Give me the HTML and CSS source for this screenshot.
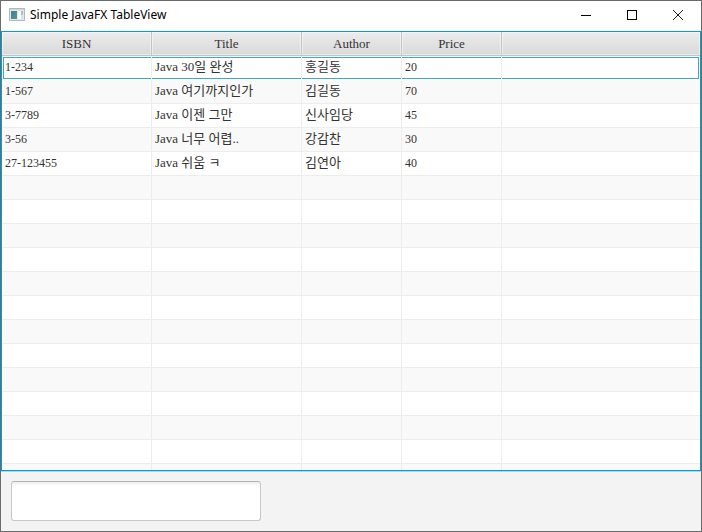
FILE: index.html
```
<!DOCTYPE html>
<html lang="ko">
<head>
<meta charset="utf-8">
<meta name="viewport" content="width=device-width, initial-scale=1">
<title>Simple JavaFX TableView</title>
<link rel="stylesheet" href="styles.css">
</head>
<body>
<div class="window">
  <header class="titlebar">
    <svg class="app-icon" width="16" height="14" viewBox="0 0 16 14" aria-hidden="true">
      <defs>
        <linearGradient id="pane" x1="0" y1="0" x2="1" y2="1">
          <stop offset="0" stop-color="#4778a8"/>
          <stop offset="1" stop-color="#48a378"/>
        </linearGradient>
      </defs>
      <rect x="0.5" y="0.5" width="15" height="12" fill="#e4e8ec" stroke="#b4b9bf"/>
      <rect x="1" y="1" width="14" height="1" fill="#d0d5db"/>
      <rect x="2" y="3" width="6" height="8" fill="url(#pane)"/>
      <rect x="9" y="3" width="3" height="8" fill="#fafbfd"/>
      <rect x="12" y="3" width="2" height="4" fill="#a5c3bb"/>
      <rect x="12" y="7" width="2" height="4" fill="#dce2e4"/>
    </svg>
    <h1 class="title">Simple JavaFX TableView</h1>
    <div class="controls">
      <button class="control" type="button" aria-label="Minimize">
        <svg width="12" height="12" viewBox="0 0 12 12"><path d="M1 6.5H11" stroke="#000"/></svg>
      </button>
      <button class="control" type="button" aria-label="Maximize">
        <svg width="12" height="12" viewBox="0 0 12 12"><rect x="1.5" y="1.5" width="9" height="9" fill="none" stroke="#000"/></svg>
      </button>
      <button class="control" type="button" aria-label="Close">
        <svg width="12" height="12" viewBox="0 0 12 12"><path d="M1 1L11 11M11 1L1 11" stroke="#000" stroke-width="0.9"/></svg>
      </button>
    </div>
  </header>
  <main class="table-view">
    <table class="books">
      <colgroup><col class="wide"><col class="wide"><col class="narrow"><col class="narrow"><col></colgroup>
      <thead>
        <tr><th scope="col">ISBN</th><th scope="col">Title</th><th scope="col">Author</th><th scope="col">Price</th><td></td></tr>
      </thead>
      <tbody>
        <tr class="focused"><td class="num">1-234</td><td>Java 30일 완성</td><td>홍길동</td><td class="num">20</td><td></td></tr>
        <tr><td class="num">1-567</td><td>Java 여기까지인가</td><td>김길동</td><td class="num">70</td><td></td></tr>
        <tr><td class="num">3-7789</td><td>Java 이젠 그만</td><td>신사임당</td><td class="num">45</td><td></td></tr>
        <tr><td class="num">3-56</td><td>Java 너무 어렵..</td><td>강감찬</td><td class="num">30</td><td></td></tr>
        <tr><td class="num">27-123455</td><td>Java 쉬움 ㅋ</td><td>김연아</td><td class="num">40</td><td></td></tr>
        <tr><td></td><td></td><td></td><td></td><td></td></tr>
        <tr><td></td><td></td><td></td><td></td><td></td></tr>
        <tr><td></td><td></td><td></td><td></td><td></td></tr>
        <tr><td></td><td></td><td></td><td></td><td></td></tr>
        <tr><td></td><td></td><td></td><td></td><td></td></tr>
        <tr><td></td><td></td><td></td><td></td><td></td></tr>
        <tr><td></td><td></td><td></td><td></td><td></td></tr>
        <tr><td></td><td></td><td></td><td></td><td></td></tr>
        <tr><td></td><td></td><td></td><td></td><td></td></tr>
        <tr><td></td><td></td><td></td><td></td><td></td></tr>
        <tr><td></td><td></td><td></td><td></td><td></td></tr>
        <tr><td></td><td></td><td></td><td></td><td></td></tr>
        <tr><td></td><td></td><td></td><td></td><td></td></tr>
      </tbody>
    </table>
  </main>
  <footer class="bottom">
    <input class="field" type="text" aria-label="Text">
  </footer>
</div>
</body>
</html>
```
FILE: styles.css
```
* { box-sizing: border-box; }

body { margin: 0; }

.window {
  display: flex;
  flex-direction: column;
  height: 100vh;
  border: 1px solid #6b6b6b;
  background: #f3f3f3;
  color: #333;
}

.titlebar {
  display: flex;
  flex: none;
  align-items: center;
  height: 30px;
  padding: 0 0 2px 8px;
  gap: 5px;
  background: #fff;
}

.app-icon { flex: none; }

.title {
  flex: 1;
  margin: 0;
  color: #000;
  font: 400 12px/18px "Noto Sans", "Noto Sans CJK KR", sans-serif;
}

.controls { display: flex; }

.control {
  display: flex;
  align-items: center;
  justify-content: center;
  width: 46px;
  height: 28px;
  padding: 0;
  border: 0;
  background: none;
}

.table-view {
  flex: 1;
  min-height: 0;
  overflow: hidden;
  border: 1px solid #039ed3;
  background: #fff;
}

.books {
  width: 100%;
  border-collapse: separate;
  border-spacing: 0;
  table-layout: fixed;
  font: 13px/20px "Liberation Serif", "Noto Sans CJK KR", serif;
}

.wide { width: 150px; }
.narrow { width: 100px; }

th,
td {
  height: 24px;
  padding: 0 3px;
  overflow: hidden;
  white-space: nowrap;
}

thead th,
thead td {
  border-right: 1px solid #c4c4c4;
  border-bottom: 1px solid #c4c4c4;
  background: linear-gradient(#ececec, #d9d9d9);
  box-shadow: inset 0 0 0 1px rgba(255, 255, 255, 0.45);
  font-weight: 400;
}

tbody td {
  padding-bottom: 2px;
  border-right: 1px solid #ededed;
  border-bottom: 1px solid #ededed;
}

thead td:last-child,
tbody td:last-child { border-right: 0; }

tbody tr:nth-child(even) { background: #f9f9f9; }

.num { font-size: 12px; }

/* Focus ring drawn across the cells, inset by one pixel from the row. */
.focused td {
  border-bottom-color: #fff;
  background:
    linear-gradient(#39a9cf, #39a9cf) 0 1px / 100% 1px no-repeat,
    linear-gradient(#39a9cf, #39a9cf) 0 100% / 100% 1px no-repeat;
}

.focused td:first-child {
  background:
    linear-gradient(#39a9cf, #39a9cf) 1px 1px / 100% 1px no-repeat,
    linear-gradient(#39a9cf, #39a9cf) 1px 100% / 100% 1px no-repeat,
    linear-gradient(#39a9cf, #39a9cf) 1px 1px / 1px 100% no-repeat;
}

.focused td:last-child {
  background:
    linear-gradient(#39a9cf, #39a9cf) -1px 1px / 100% 1px no-repeat,
    linear-gradient(#39a9cf, #39a9cf) -1px 100% / 100% 1px no-repeat,
    linear-gradient(#39a9cf, #39a9cf) calc(100% - 1px) 1px / 1px 100% no-repeat;
}

.bottom {
  display: flex;
  flex: none;
  padding: 10px;
  box-shadow: inset 0 1px #a5d9ec;
}

.field {
  width: 250px;
  height: 40px;
  padding: 4px 7px;
  border: 1px solid #c8c8c8;
  border-top-color: #b5b5b5;
  border-radius: 3px;
  outline: 0;
  background: linear-gradient(#ededed, #fff 4px);
  font: 13px/20px "Liberation Serif", "Noto Sans CJK KR", serif;
}
```
